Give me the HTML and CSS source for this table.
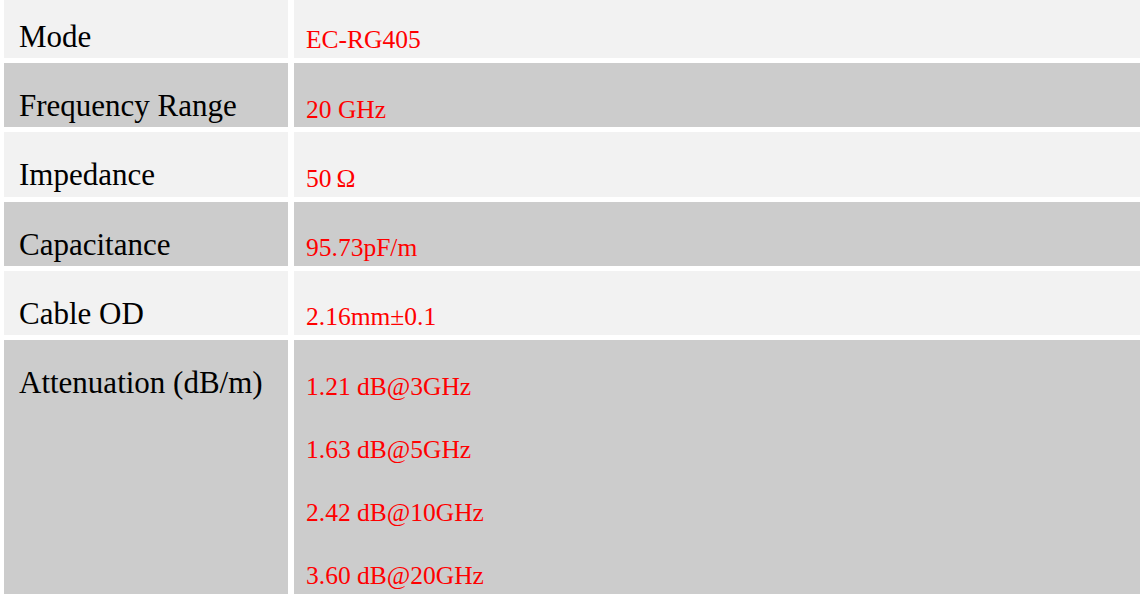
FILE: index.html
```html
<!DOCTYPE html>
<html lang="en">
<head>
  <meta charset="UTF-8" />
  <meta name="viewport" content="width=device-width, initial-scale=1.0" />
  <title>EC-RG405 Specifications</title>
  <link rel="stylesheet" href="styles.css">
</head>
<body>
  <div class="spec">
    <div class="spec-row">
      <div class="spec-label">Mode</div>
      <div class="spec-value"><p>EC-RG405</p></div>
    </div>
    <div class="spec-row alt">
      <div class="spec-label">Frequency Range</div>
      <div class="spec-value"><p>20 GHz</p></div>
    </div>
    <div class="spec-row">
      <div class="spec-label">Impedance</div>
      <div class="spec-value"><p>50&#8201;Ω</p></div>
    </div>
    <div class="spec-row alt">
      <div class="spec-label">Capacitance</div>
      <div class="spec-value"><p>95.73pF/m</p></div>
    </div>
    <div class="spec-row">
      <div class="spec-label">Cable OD</div>
      <div class="spec-value"><p>2.16mm±0.1</p></div>
    </div>
    <div class="spec-row alt last">
      <div class="spec-label">Attenuation (dB/m)</div>
      <div class="spec-value">
        <p>1.21 dB@3GHz</p>
        <p>1.63 dB@5GHz</p>
        <p>2.42 dB@10GHz</p>
        <p>3.60 dB@20GHz</p>
      </div>
    </div>
  </div>
</body>
</html>
```

FILE: styles.css
```css
*{box-sizing:border-box;}
html,body{margin:0;padding:0;background:#fff;overflow:hidden;}
body{width:1140px;height:594px;font-family:"Liberation Serif","Times New Roman",serif;}
.spec{display:flex;flex-direction:column;gap:5px;margin-top:-6.25px;padding-left:4px;}
.spec-row{display:grid;grid-template-columns:284px 1fr;column-gap:6px;height:64.25px;}
.spec-row.last{height:auto;}
.spec-label,.spec-value{background:#f2f2f2;}
.alt .spec-label,.alt .spec-value{background:#ccc;}
.spec-label{padding:25px 0 0 15px;font-size:31px;line-height:36px;color:#000;}
.spec-value{padding:31.6px 0 0 12px;display:flex;flex-direction:column;gap:33.3px;}
.last .spec-value{padding-bottom:20px;}
.spec-value p{margin:0;font-size:25.5px;line-height:30px;color:#f00;}
```
